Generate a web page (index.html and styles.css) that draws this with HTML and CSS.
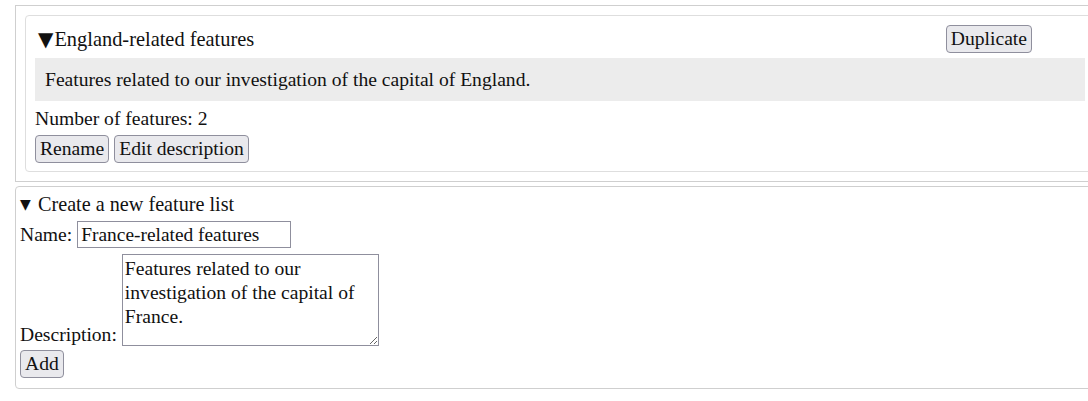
FILE: index.html
```html
<!DOCTYPE html>
<html>
<head>
<meta charset="utf-8">
<link rel="stylesheet" href="styles.css">
</head>
<body>
<div class="outer">
  <div class="card">
    <div class="card-head">
      <span class="card-title"><span class="tri">▼</span>England-related features</span>
      <button class="btn dup">Duplicate</button>
    </div>
    <div class="desc">Features related to our investigation of the capital of England.</div>
    <div class="count">Number of features: 2</div>
    <div class="actions">
      <button class="btn">Rename</button>
      <button class="btn">Edit description</button>
    </div>
  </div>
</div>
<details class="create" open>
  <summary>Create a new feature list</summary>
  <div class="row name-row"><span>Name:</span><input class="name-input" type="text" value="France-related features"></div>
  <div class="row desc-row"><span class="lbl">Description:</span><textarea class="desc-input">Features related to our investigation of the capital of France.</textarea></div>
  <div class="row add-row"><button class="btn">Add</button></div>
</details>
</body>
</html>
```
FILE: styles.css
```css
html, body {
  overflow: hidden;
}
body {
  margin: 0;
  padding: 5px 0 0 15px;
  font-family: "Liberation Serif", serif;
  font-size: 19.6px;
  color: #111;
  background: #fff;
}
.outer {
  box-sizing: border-box;
  width: 1090px;
  border: 1px solid #cfcfcf;
  padding: 9px;
}
.card {
  border: 1px solid #dedede;
  border-radius: 4px;
  padding: 9px 9px 8px 9px;
}
.card-head {
  display: flex;
  align-items: center;
  justify-content: space-between;
  height: 28px;
}
.card-title {
  font-size: 20.4px;
  padding-left: 3px;
  display: flex;
  align-items: baseline;
}
.tri {
  font-family: "DejaVu Sans", sans-serif;
  font-size: 20px;
  margin-right: 1px;
}
.dup {
  margin-right: 53px;
}
.desc {
  margin-top: 5px;
  background: #ececec;
  padding: 10px;
  line-height: 23px;
}
.count {
  margin-top: 5px;
  line-height: 25px;
}
.actions {
  margin-top: 4px;
  display: flex;
  gap: 5px;
}
.btn {
  font-family: "Liberation Serif", serif;
  font-size: 19.6px;
  color: #111;
  background: #e9e9ed;
  border: 1px solid #8f8f9d;
  border-radius: 4px;
  padding: 1px 4px;
  height: 28px;
  line-height: 24px;
}
.create {
  box-sizing: border-box;
  width: 1100px;
  margin-top: 4px;
  border: 1px solid #cfcfcf;
  border-radius: 4px;
  padding: 5px 4px 10px 4px;
}
.create summary {
  display: block;
  font-size: 20.2px;
  line-height: 24px;
  height: 24px;
  margin-bottom: 5px;
  list-style: none;
}
.create summary::-webkit-details-marker {
  display: none;
}
.create summary::before {
  content: "▼";
  display: inline-block;
  font-family: "DejaVu Sans", sans-serif;
  font-size: 14px;
  width: 18px;
  vertical-align: 2px;
}
.row {
  display: flex;
  gap: 5px;
  line-height: 24px;
}
.name-row {
  align-items: baseline;
}
.desc-row {
  margin-top: 6px;
  align-items: flex-end;
}
.add-row {
  margin-top: 4px;
}
.name-input {
  box-sizing: border-box;
  font-family: "Liberation Serif", serif;
  font-size: 19.4px;
  width: 214px;
  height: 27px;
  border: 1px solid #8f8f9d;
  padding: 0 3px;
  border-radius: 0;
  color: #111;
  margin: 0;
}
.desc-input {
  box-sizing: border-box;
  font-family: "Liberation Serif", serif;
  font-size: 19.6px;
  line-height: 24px;
  width: 257px;
  height: 92px;
  border: 1px solid #8f8f9d;
  padding: 2px;
  margin: 0;
  color: #111;
}
.lbl {
  line-height: 22px;
}
```
